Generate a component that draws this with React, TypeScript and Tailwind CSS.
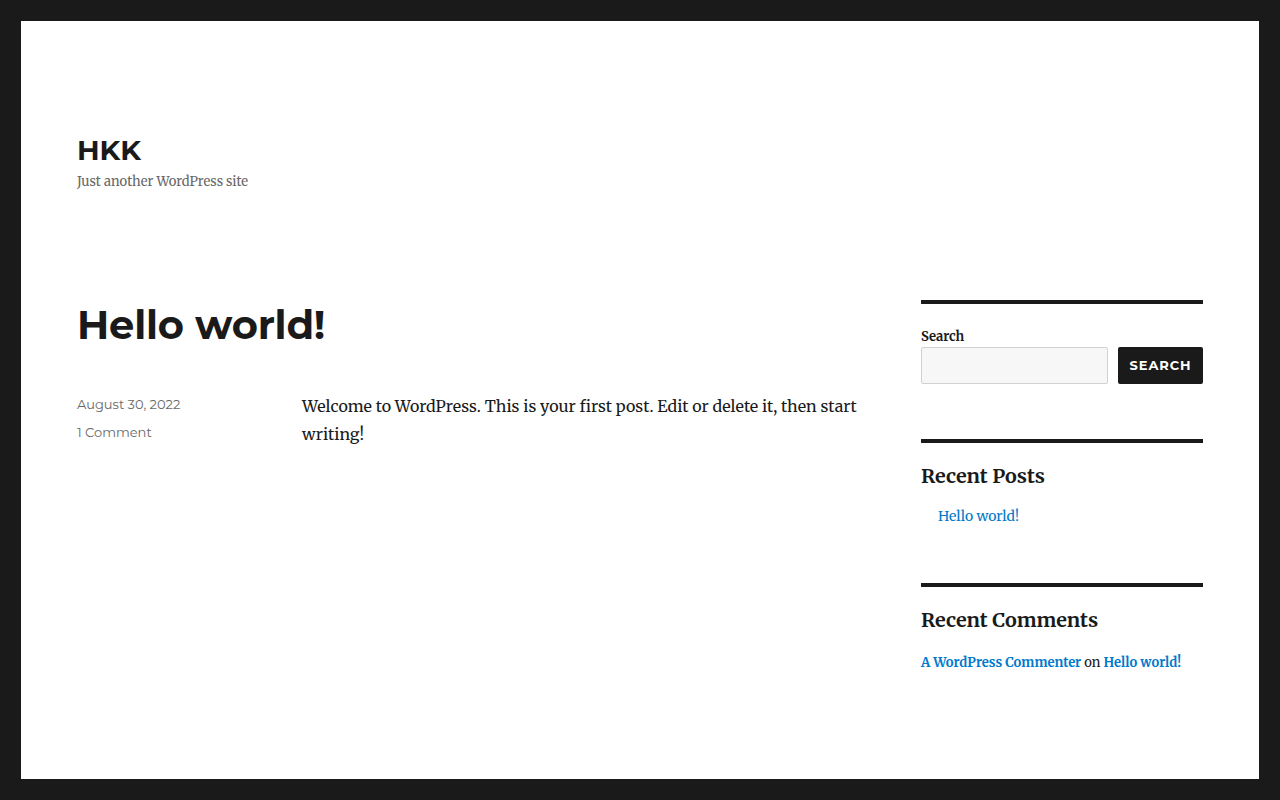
const sans = "font-['Montserrat','Inter','Noto_Sans',sans-serif]";
const serif = "font-['Merriweather','DejaVu_Serif','Liberation_Serif',serif]";

function Widget({ children, className = '' }: { children: React.ReactNode; className?: string }) {
  return <section className={`border-t-4 border-[#1a1a1a] ${className}`}>{children}</section>;
}

export default function App() {
  return (
    <div className="min-h-[800px] bg-[#1a1a1a] p-[21px]">
      <div className="h-[758px] bg-white px-[56px] text-[#1a1a1a]">
        <header className="pt-[112px]">
          <h1 className={`${sans} text-[28px] font-bold leading-[35px]`}>HKK</h1>
          <p className={`${serif} mt-[4px] text-[13px] leading-[20px] text-[#686868]`}>
            Just another WordPress site
          </p>
        </header>

        <div className="mt-[108px] flex justify-between">
          <main className="w-[800px]">
            <h2 className={`${sans} text-[40px] font-bold leading-[49px] tracking-[-0.2px]`}>Hello world!</h2>
            <div className="mt-[41px] flex">
              <div className={`${sans} w-[225px] shrink-0 text-[13px] leading-[28px] text-[#686868]`}>
                <div>August 30, 2022</div>
                <div>1 Comment</div>
              </div>
              <p className={`${serif} w-[565px] pt-[2px] text-[16px] leading-[28px]`}>
                Welcome to WordPress. This is your first post. Edit or delete it, then start writing!
              </p>
            </div>
          </main>

          <aside className={`${serif} w-[282px] shrink-0`}>
            <Widget>
              <label className="mt-[22px] block text-[13px] font-bold leading-[21px]">Search</label>
              <div className="flex gap-[10px]">
                <div className="h-[37px] w-[187px] rounded-[2px] border border-[#d1d1d1] bg-[#f7f7f7]" />
                <button
                  className={`${sans} h-[37px] flex-1 rounded-[2px] bg-[#1a1a1a] text-[13px] font-bold tracking-[0.9px] text-white`}
                >
                  SEARCH
                </button>
              </div>
            </Widget>

            <Widget className="mt-[55px]">
              <h3 className="mt-[19px] text-[19.7px] font-bold leading-[28px]">Recent Posts</h3>
              <ul className="mt-[14px] pl-[17px]">
                <li className="text-[14px] leading-[24px] text-[#007acc]">Hello world!</li>
              </ul>
            </Widget>

            <Widget className="mt-[55px]">
              <h3 className="mt-[19px] text-[19.7px] font-bold leading-[28px]">Recent Comments</h3>
              <p className="mt-[17px] text-[13px] leading-[24px]">
                <span className="font-bold text-[#007acc]">A WordPress Commenter</span> on{' '}
                <span className="font-bold text-[#007acc]">Hello world!</span>
              </p>
            </Widget>
          </aside>
        </div>
      </div>
    </div>
  );
}
